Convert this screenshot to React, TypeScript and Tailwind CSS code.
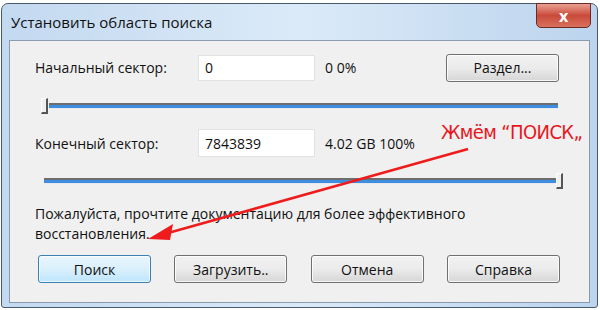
import React from 'react';

function WinButton({ label, primary = false }: { label: string; primary?: boolean }) {
  return (
    <button
      type="button"
      className={
        primary
          ? 'w-[113px] h-[28px] rounded-[3px] border border-[#3c7fb1] bg-gradient-to-b from-[#eaf6fd] via-[#d9f0fc] to-[#bee6fd] text-[14px] text-[#111] shadow-[inset_0_0_0_1px_#ffffffaa]'
          : 'w-[113px] h-[28px] rounded-[3px] border border-[#707070] bg-gradient-to-b from-[#f2f2f2] via-[#ebebeb] to-[#d6d6d6] text-[14px] text-[#111] shadow-[inset_0_0_0_1px_#ffffffcc]'
      }
    >
      {label}
    </button>
  );
}

function Track({ thumb }: { thumb: 'left' | 'right' }) {
  return (
    <div className="relative h-[18px] flex items-center">
      <div className="w-full flex flex-col">
        <div className="h-[2px] bg-[#6d6d6d]" />
        <div className="h-[3px] bg-[#3d8ee0]" />
        <div className="h-[1px] bg-[#e9e9e9]" />
      </div>
      {thumb === 'left' ? (
        <div className="absolute left-[-8px] top-[1px] w-[7px] h-[16px] border-l border-t border-[#ffffff] border-r-2 border-b-2 border-r-[#555] border-b-[#555] bg-[#f0f0f0]" />
      ) : (
        <div className="absolute right-[-6px] top-[1px] w-[7px] h-[16px] border-l border-t border-[#ffffff] border-r-2 border-b-2 border-r-[#555] border-b-[#555] bg-[#f0f0f0]" />
      )}
    </div>
  );
}

export default function App() {
  return (
    <div
      className="w-[600px] h-[310px] bg-white pt-[3px] pl-[1px]"
      style={{ fontFamily: '"Open Sans", "Noto Sans", sans-serif' }}
    >
      <div className="w-[597px] h-[305px] rounded-t-[7px] rounded-b-[3px] border border-[#4a5a6e] bg-gradient-to-r from-[#c3d9f0] via-[#dbeaf8] to-[#bcd4ee] flex flex-col">
        {/* title bar */}
        <div className="h-[36px] flex items-start justify-between">
          <div className="pl-[9px] pt-[8px] text-[15px] text-[#111] leading-[20px]">Установить область поиска</div>
          <div className="mr-[6px] mt-[-1px] w-[55px] h-[25px] rounded-b-[5px] border border-[#6b2a24] bg-gradient-to-b from-[#e8a093] via-[#c9493a] to-[#d8715d] flex items-center justify-center text-white text-[16px] font-bold leading-none">
            x
          </div>
        </div>

        {/* client area */}
        <div className="mx-[7px] h-[263px] border border-[#8a9bb0] bg-[#f0f0f0] relative">
          <div className="pl-[25px] pr-[29px] pt-[13px] flex flex-col text-[#111]">
            <div className="flex items-center h-[27px] text-[14px]">
              <div className="w-[163px]">Начальный сектор:</div>
              <div className="w-[117px] h-[26px] bg-white border border-[#e2e2e2] px-[6px] flex items-center">0</div>
              <div className="ml-[10px] w-[121px]">0 0%</div>
              <WinButton label="Раздел..." />
            </div>
            <div className="mt-[16px] ml-[14px] mr-[2px]">
              <Track thumb="left" />
            </div>
            <div className="mt-[14px] flex items-center h-[28px] text-[14px]">
              <div className="w-[163px]">Конечный сектор:</div>
              <div className="w-[117px] h-[28px] bg-white border border-[#e2e2e2] px-[6px] flex items-center">7843839</div>
              <div className="ml-[10px]">4.02 GB 100%</div>
            </div>
            <div className="mt-[15px] ml-[9px] mr-[3px]">
              <Track thumb="right" />
            </div>
            <div className="mt-[14px] text-[14px] leading-[20px]">
              Пожалуйста, прочтите документацию для более эффективного
              <br />
              восстановления.
            </div>
            <div className="mt-[11px] flex justify-between pl-[3px]">
              <WinButton label="Поиск" primary />
              <WinButton label="Загрузить.." />
              <WinButton label="Отмена" />
              <WinButton label="Справка" />
            </div>
          </div>

          {/* annotation */}
          <div
            className="absolute left-[431px] top-[80px] whitespace-nowrap text-[#e8161e] text-[20px] leading-[22px] tracking-[-0.6px]"
            style={{ fontFamily: '"DejaVu Sans Condensed", "Liberation Sans", sans-serif' }}
          >
            Жмём “ПОИСК„
          </div>
          <svg className="absolute left-0 top-0" width="581" height="263" viewBox="0 0 581 263">
            <line x1="458" y1="108" x2="158" y2="192" stroke="#ee1c1c" strokeWidth="2.5" />
            <polygon points="138,198 163,183 160,199" fill="#ee1c1c" />
          </svg>
        </div>
      </div>
    </div>
  );
}
